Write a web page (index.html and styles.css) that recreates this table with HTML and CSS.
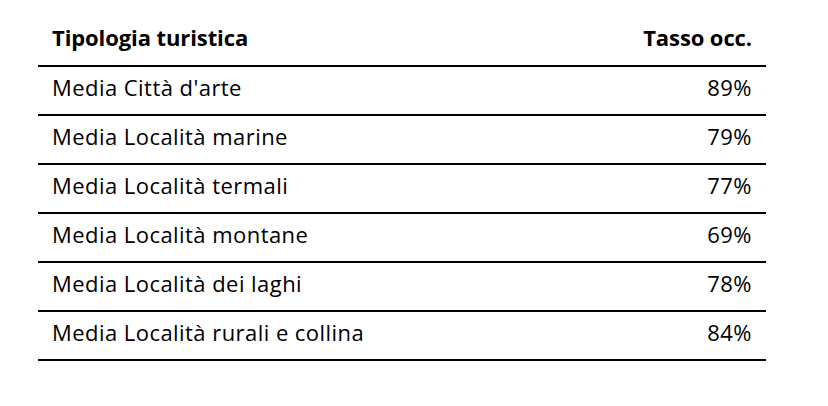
FILE: index.html
```html
<!DOCTYPE html>
<html lang="it">
<head>
<meta charset="utf-8">
<link rel="stylesheet" href="styles.css">
</head>
<body>
<table class="occ">
  <thead>
    <tr><th class="name">Tipologia turistica</th><th class="val">Tasso occ.</th></tr>
  </thead>
  <tbody>
    <tr><td class="name">Media Città d'arte</td><td class="val">89%</td></tr>
    <tr><td class="name">Media Località marine</td><td class="val">79%</td></tr>
    <tr><td class="name">Media Località termali</td><td class="val">77%</td></tr>
    <tr><td class="name">Media Località montane</td><td class="val">69%</td></tr>
    <tr><td class="name">Media Località dei laghi</td><td class="val">78%</td></tr>
    <tr><td class="name">Media Località rurali e collina</td><td class="val">84%</td></tr>
  </tbody>
</table>
</body>
</html>
```
FILE: styles.css
```css
html, body {
  margin: 0;
  background: #fff;
}
body {
  padding: 17px 0 0 38px;
  font-family: "Open Sans", "Noto Sans", sans-serif;
  color: #000;
}
.occ {
  width: 728px;
  border-collapse: collapse;
  font-size: 22px;
}
.occ th,
.occ td {
  box-sizing: border-box;
  height: 49px;
  padding: 0 14px 7px;
  border-bottom: 2px solid #000;
  vertical-align: middle;
  line-height: 30px;
}
.occ th {
  font-weight: 700;
  letter-spacing: -0.1px;
  padding-bottom: 8px;
}
.occ td {
  letter-spacing: 0.45px;
}
.occ .name { text-align: left; }
.occ .val { text-align: right; }
```
